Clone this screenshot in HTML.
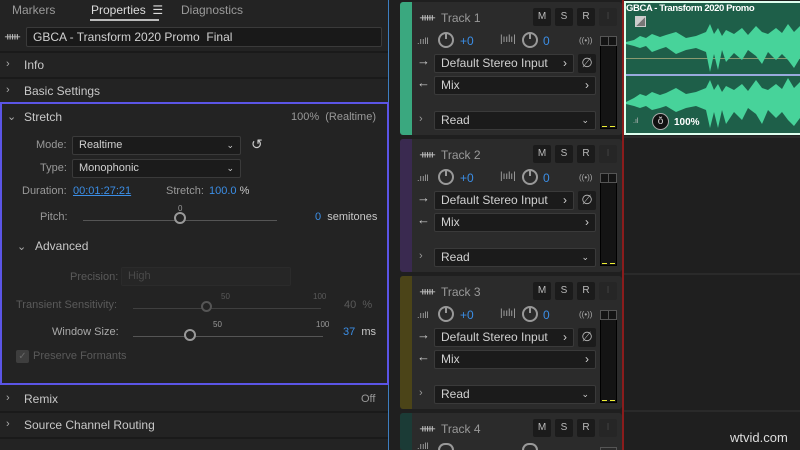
<!DOCTYPE html>
<html style="width:800px;height:450px;overflow:hidden"><head><meta charset="utf-8"><style>
*{margin:0;padding:0;box-sizing:border-box}
body{width:800px;height:450px;overflow:hidden;background:#1d1d1d;font-family:"Liberation Sans",sans-serif;font-size:11px;color:#c8c8c8;position:relative}
.a{position:absolute;white-space:nowrap}
.dd{position:absolute;background:#1b1b1b;border:1px solid #3a3a3a;border-radius:2px;color:#d0d0d0;padding-left:6px;line-height:17px}
.sep{position:absolute;left:0;width:388px;height:2px;background:#1a1a1a}
.blue{color:#3b8ee6}
.dim{color:#5a5a5a}
.btn{position:absolute;width:18px;height:18px;background:#1b1b1b;border-radius:2px;color:#bbb;text-align:center;line-height:18px;font-size:10px}
.track{position:absolute;left:400px;width:222px;background:#2b2b2b;border-radius:3px}
.bar{position:absolute;left:0;top:0;width:12px;height:100%;border-radius:3px 0 0 3px}
.knob{position:absolute;width:16px;height:16px;border:2px solid #999;border-radius:50%}
.knob:after{content:"";position:absolute;left:5px;top:-1px;width:2px;height:6px;background:#999}
</style></head><body>
<div class="a" style="left:0;top:0;width:388px;height:450px;background:#232323"></div>
<div class="a" style="left:388px;top:0;width:1px;height:450px;background:#3d7ec0"></div>
<div class="a" style="left:12px;top:3px;font-size:12px;color:#9a9a9a">Markers</div>
<div class="a" style="left:91px;top:3px;font-size:12px;color:#dcdcdc">Properties &nbsp;☰</div>
<div class="a" style="left:90px;top:19px;width:69px;height:2px;background:#bbb"></div>
<div class="a" style="left:181px;top:3px;font-size:12px;color:#9a9a9a">Diagnostics</div>
<div class="a" style="left:5px;top:30px;font-size:11px;color:#bbb">ᚔ</div>
<div class="dd" style="left:26px;top:27px;width:356px;height:20px;font-size:12px;line-height:18px;background:#191919">GBCA - Transform 2020 Promo&nbsp; Final</div>
<div class="sep" style="top:51px"></div>
<div class="a" style="left:6px;top:58px;color:#aaa">›</div><div class="a" style="left:24px;top:58px;font-size:12px">Info</div>
<div class="sep" style="top:77px"></div>
<div class="a" style="left:6px;top:84px;color:#aaa">›</div><div class="a" style="left:24px;top:84px;font-size:12px">Basic Settings</div>
<div class="a" style="left:0;top:102px;width:389px;height:283px;border:2px solid #5b55e6"></div>
<div class="a" style="left:7px;top:110px;color:#aaa">⌄</div><div class="a" style="left:24px;top:110px;font-size:12px">Stretch</div>
<div class="a" style="left:291px;top:111px;color:#999">100%&nbsp; (Realtime)</div>
<div class="a" style="left:36px;top:139px;color:#999">Mode:</div>
<div class="dd" style="left:72px;top:136px;width:169px;height:19px">Realtime<span style="position:absolute;right:6px;font-size:9px">⌄</span></div>
<div class="a" style="left:251px;top:136px;font-size:14px;color:#ccc">↺</div>
<div class="a" style="left:40px;top:162px;color:#999">Type:</div>
<div class="dd" style="left:72px;top:159px;width:169px;height:19px">Monophonic<span style="position:absolute;right:6px;font-size:9px">⌄</span></div>
<div class="a" style="left:22px;top:185px;color:#999">Duration:</div>
<div class="a blue" style="left:73px;top:185px;text-decoration:underline">00:01:27:21</div>
<div class="a" style="left:166px;top:185px;color:#999">Stretch:</div>
<div class="a" style="left:209px;top:185px"><span class="blue">100.0</span> %</div>
<div class="a" style="left:40px;top:211px;color:#999">Pitch:</div>
<div class="a" style="left:83px;top:220px;width:194px;height:1px;background:#555"></div>
<div class="a" style="left:174px;top:212px;width:12px;height:12px;border:2px solid #999;border-radius:50%;background:#232323"></div>
<div class="a" style="left:178px;top:204px;font-size:8px;color:#999">0</div>
<div class="a" style="left:315px;top:211px"><span class="blue">0</span>&nbsp; semitones</div>
<div class="a" style="left:17px;top:240px;color:#aaa">⌄</div><div class="a" style="left:35px;top:239px;font-size:12px">Advanced</div>
<div class="a dim" style="left:70px;top:271px">Precision:</div>
<div class="dd" style="left:121px;top:267px;width:170px;height:19px;background:#262626;border-color:#2b2b2b;color:#4a4a4a">High</div>
<div class="a dim" style="left:16px;top:299px">Transient Sensitivity:</div>
<div class="a" style="left:133px;top:308px;width:188px;height:1px;background:#3f3f3f"></div>
<div class="a" style="left:201px;top:301px;width:11px;height:11px;border:2px solid #555;border-radius:50%;background:#232323"></div>
<div class="a dim" style="left:221px;top:292px;font-size:8px">50</div><div class="a dim" style="left:313px;top:292px;font-size:8px">100</div>
<div class="a dim" style="left:344px;top:299px">40 &nbsp;%</div>
<div class="a" style="left:52px;top:326px;color:#aaa">Window Size:</div>
<div class="a" style="left:133px;top:336px;width:190px;height:1px;background:#555"></div>
<div class="a" style="left:184px;top:329px;width:12px;height:12px;border:2px solid #999;border-radius:50%;background:#232323"></div>
<div class="a" style="left:213px;top:320px;font-size:8px;color:#999">50</div><div class="a" style="left:316px;top:320px;font-size:8px;color:#999">100</div>
<div class="a" style="left:343px;top:326px"><span class="blue">37</span>&nbsp; ms</div>
<div class="a" style="left:16px;top:350px;width:13px;height:13px;background:#3e3e3e;border-radius:2px;color:#666;font-size:10px;text-align:center;line-height:13px">✓</div>
<div class="a dim" style="left:33px;top:350px">Preserve Formants</div>
<div class="a" style="left:6px;top:392px;color:#aaa">›</div><div class="a" style="left:24px;top:392px;font-size:12px">Remix</div>
<div class="a" style="left:361px;top:393px;color:#999">Off</div>
<div class="sep" style="top:411px"></div>
<div class="a" style="left:6px;top:418px;color:#aaa">›</div><div class="a" style="left:24px;top:418px;font-size:12px">Source Channel Routing</div>
<div class="sep" style="top:437px"></div>

<div class="a" style="left:389px;top:0;width:411px;height:450px;background:#1f1f1f"></div>
<div class="a" style="left:622px;top:0;width:2px;height:450px;background:#8a1c1c"></div>
<div class="a" style="left:624px;top:136px;width:176px;height:2px;background:#2a2a2a"></div>
<div class="a" style="left:624px;top:273px;width:176px;height:2px;background:#2a2a2a"></div>
<div class="a" style="left:624px;top:410px;width:176px;height:2px;background:#2a2a2a"></div>

<div class="a" style="left:624px;top:1px;width:176px;height:134px;background:#1e5f49;border:2px solid #dfe;border-right:none"></div>
<div class="a" style="left:626px;top:3px;font-size:9.5px;font-weight:bold;color:#fff;letter-spacing:-0.4px">GBCA - Transform 2020 Promo</div>
<div class="a" style="left:635px;top:16px;width:11px;height:11px;background:linear-gradient(135deg,#ccc 50%,#777 50%);border:1px solid #ccc"></div>
<div class="a" style="left:626px;top:74px;width:174px;height:2px;background:#9ad"></div>
<div class="a" style="left:626px;top:58px;width:174px;height:1px;background:#8a9a70"></div>
<svg class="a" style="left:626px;top:20px" width="174" height="110">
<path fill="#47d39a" d="M0,22 L8,20 14,16 20,18 26,14 34,17 40,15 50,12 60,18 70,16 80,12 84,4 88,14 92,8 96,16 100,10 108,14 116,8 122,15 130,6 136,12 142,14 150,8 156,13 162,4 168,12 174,6 L174,38 168,48 162,40 156,34 150,40 142,32 136,44 130,36 122,30 116,40 108,33 100,42 96,30 92,50 88,34 84,52 80,32 70,28 60,30 50,34 40,27 34,29 26,32 20,26 14,28 8,26 0,24Z"/>
<path fill="#47d39a" d="M0,82 L8,78 14,74 20,76 26,72 34,75 40,73 50,68 60,74 70,72 80,68 84,60 88,70 92,64 96,72 100,66 108,70 116,64 122,71 130,60 136,68 142,70 150,64 156,69 162,58 168,68 174,62 L174,98 168,106 162,100 156,92 150,98 142,90 136,104 130,94 122,88 116,100 108,92 100,104 96,90 92,108 88,92 84,108 80,90 70,86 60,88 50,92 40,86 34,88 26,90 20,86 14,88 8,86 0,84Z"/>
</svg>
<div class="a" style="left:633px;top:118px;font-size:7px;color:#bbb">.ıl</div>
<div class="a" style="left:652px;top:113px;width:17px;height:17px;border-radius:50%;background:#111;border:1px solid #aaa;color:#ddd;font-size:10px;text-align:center;line-height:15px">ŏ</div>
<div class="a" style="left:674px;top:117px;font-size:10px;font-weight:bold;color:#fff">100%</div>

<div id="tracks" style="position:absolute;left:0;top:0;width:800px;height:450px;overflow:hidden"></div>
<script>
var cols=['#3aa87f','#3a2a50','#4b4418','#1b3b36'],tops=[2,139,276,413],h='';
for(var i=0;i<4;i++){var T=tops[i],last=(i==3);
h+='<div class="track" style="top:'+T+'px;height:'+(last?37:133)+'px;'+(last?'border-radius:3px 3px 0 0':'')+'"><div class="bar" style="background:'+cols[i]+'"></div></div>';
h+='<div class="a" style="left:420px;top:'+(T+9)+'px;color:#bbb;font-size:11px">ᚔ</div>';
h+='<div class="a" style="left:441px;top:'+(T+9)+'px;color:#999;font-size:12px">Track '+(i+1)+'</div>';
['M','S','R','I'].forEach(function(c,k){h+='<div class="btn" style="left:'+(533+k*22)+'px;top:'+(T+6)+'px;'+(c=='I'?'color:#444;background:#262626':'')+'">'+c+'</div>';});
if(last)break;
h+='<div class="a" style="left:417px;top:'+(T+34)+'px;font-size:9px;color:#aaa">.ııll</div>';
h+='<div class="knob" style="left:438px;top:'+(T+30)+'px"></div>';
h+='<div class="a blue" style="left:460px;top:'+(T+32)+'px;font-size:12px">+0</div>';
h+='<div class="a" style="left:500px;top:'+(T+32)+'px;font-size:10px;color:#aaa">|ıılı|</div>';
h+='<div class="knob" style="left:522px;top:'+(T+30)+'px"></div>';
h+='<div class="a blue" style="left:543px;top:'+(T+32)+'px;font-size:12px">0</div>';
h+='<div class="a" style="left:579px;top:'+(T+34)+'px;font-size:8px;color:#aaa">((•))</div>';
h+='<div class="a" style="left:417px;top:'+(T+51)+'px;font-size:13px;color:#ccc">→</div>';
h+='<div class="dd" style="left:434px;top:'+(T+52)+'px;width:140px;height:19px;font-size:12px">Default Stereo Input<span style="position:absolute;right:6px">›</span></div>';
h+='<div class="btn" style="left:578px;top:'+(T+52)+'px;width:18px;height:19px;font-size:13px">∅</div>';
h+='<div class="a" style="left:417px;top:'+(T+73)+'px;font-size:13px;color:#ccc">←</div>';
h+='<div class="dd" style="left:434px;top:'+(T+74)+'px;width:162px;height:19px;font-size:12px">Mix<span style="position:absolute;right:6px">›</span></div>';
h+='<div class="a" style="left:419px;top:'+(T+111)+'px;color:#999">›</div>';
h+='<div class="dd" style="left:434px;top:'+(T+109)+'px;width:162px;height:19px;font-size:12px">Read<span style="position:absolute;right:6px;font-size:9px">⌄</span></div>';
h+='<div class="a" style="left:600px;top:'+(T+34)+'px;width:17px;height:93px;background:#141414;border:1px solid #000"></div>';
h+='<div class="a" style="left:600px;top:'+(T+34)+'px;width:17px;height:10px;border:1px solid #555"></div>';
h+='<div class="a" style="left:608px;top:'+(T+34)+'px;width:1px;height:10px;background:#555"></div>';
h+='<div class="a" style="left:602px;top:'+(T+124)+'px;width:5px;height:1px;background:#ee3"></div><div class="a" style="left:610px;top:'+(T+124)+'px;width:5px;height:1px;background:#ee3"></div>';
}
h+='<div class="a" style="left:417px;top:441px;font-size:9px;color:#aaa">.ııll</div>';
h+='<div class="a" style="left:438px;top:443px;width:16px;height:7px;border:2px solid #999;border-bottom:none;border-radius:8px 8px 0 0"></div>';
h+='<div class="a" style="left:522px;top:443px;width:16px;height:7px;border:2px solid #999;border-bottom:none;border-radius:8px 8px 0 0"></div>';
h+='<div class="a" style="left:600px;top:447px;width:17px;height:3px;border:1px solid #555;border-bottom:none"></div>';
document.getElementById('tracks').innerHTML=h;
</script>
<div class="a" style="left:730px;top:430px;font-size:13px;color:#ddd;line-height:15px">wtvid.com</div>
</body></html>
